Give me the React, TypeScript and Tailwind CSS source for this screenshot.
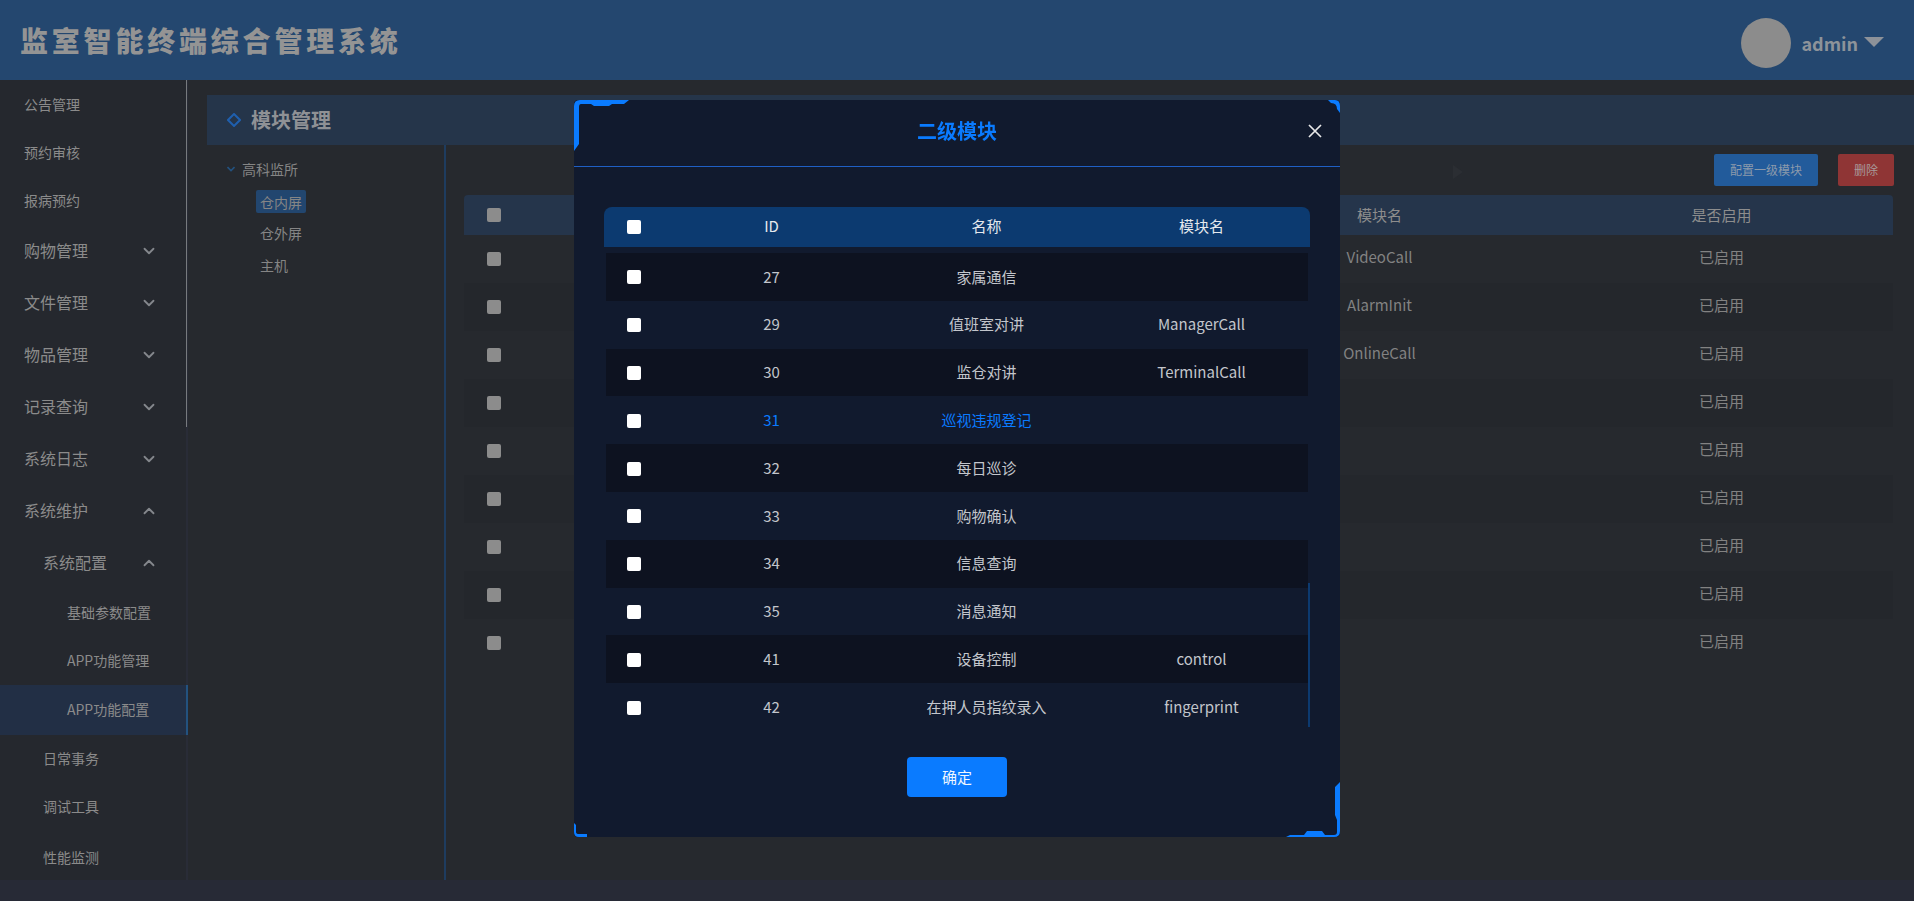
import React from "react";
import { ChevronDown, ChevronUp } from "lucide-react";

const FONT = '"Noto Sans CJK SC", sans-serif';

type NavItem = { label: string; indent: number; big?: boolean; icon?: "down" | "up"; active?: boolean; h: string };

const NAV: NavItem[] = [
  { label: "公告管理", indent: 24, h: "h-[49px]" },
  { label: "预约审核", indent: 24, h: "h-[48px]" },
  { label: "报病预约", indent: 24, h: "h-[48px]" },
  { label: "购物管理", indent: 24, big: true, icon: "down", h: "h-[52px]" },
  { label: "文件管理", indent: 24, big: true, icon: "down", h: "h-[52px]" },
  { label: "物品管理", indent: 24, big: true, icon: "down", h: "h-[52px]" },
  { label: "记录查询", indent: 24, big: true, icon: "down", h: "h-[52px]" },
  { label: "系统日志", indent: 24, big: true, icon: "down", h: "h-[52px]" },
  { label: "系统维护", indent: 24, big: true, icon: "up", h: "h-[52px]" },
  { label: "系统配置", indent: 43, big: true, icon: "up", h: "h-[52px]" },
  { label: "基础参数配置", indent: 67, h: "h-[48px]" },
  { label: "APP功能管理", indent: 67, h: "h-[48px]" },
  { label: "APP功能配置", indent: 67, active: true, h: "h-[50px]" },
  { label: "日常事务", indent: 43, h: "h-[48px]" },
  { label: "调试工具", indent: 43, h: "h-[48px]" },
  { label: "性能监测", indent: 43, h: "h-[50px] pt-[3px]" },
];

const PAGE_ROWS = [
  { name: "VideoCall" },
  { name: "AlarmInit" },
  { name: "OnlineCall" },
  { name: "" },
  { name: "" },
  { name: "" },
  { name: "" },
  { name: "" },
  { name: "" },
];

const MODAL_ROWS = [
  { id: 27, name: "家属通信", mod: "" },
  { id: 29, name: "值班室对讲", mod: "ManagerCall" },
  { id: 30, name: "监仓对讲", mod: "TerminalCall" },
  { id: 31, name: "巡视违规登记", mod: "", hot: true },
  { id: 32, name: "每日巡诊", mod: "" },
  { id: 33, name: "购物确认", mod: "" },
  { id: 34, name: "信息查询", mod: "" },
  { id: 35, name: "消息通知", mod: "" },
  { id: 41, name: "设备控制", mod: "control" },
  { id: 42, name: "在押人员指纹录入", mod: "fingerprint" },
];

function Sidebar() {
  return (
    <aside className="relative w-[188px] shrink-0 bg-[#25282e] border-r-2 border-[#292c37] text-[#8b8b8b]">
      {NAV.map((n) => (
        <div
          key={n.label}
          style={{ paddingLeft: n.indent }}
          className={`flex items-center justify-between pr-[30px] ${n.h} ${n.big ? "text-base" : "text-sm"} ${
            n.active ? "bg-[#222f45] relative" : ""
          }`}
        >
          <span className="pb-[2px]">{n.label}</span>
          {n.icon === "down" && <ChevronDown size={18} strokeWidth={2.4} className="mr-[-2px] text-[#84878c]" />}
          {n.icon === "up" && <ChevronUp size={18} strokeWidth={2.4} className="mr-[-2px] text-[#84878c]" />}
          {n.active && <span className="absolute right-[-2px] top-0 h-full w-[2px] bg-[#23527f]" />}
        </div>
      ))}
      <span className="absolute right-[-1px] top-0 h-[347px] w-[1px] bg-[#777a7e]" />
    </aside>
  );
}

function PageTable() {
  return (
    <div className="text-[15px] text-[#828282]">
      <div className="grid grid-cols-[60px_685px_341px_343px] h-[40px] items-center rounded-t bg-[#25354b] text-[#8d8d8d]">
        <span className="flex justify-center">
          <span className="block size-[14px] rounded-[2px] bg-[#8c8c8c]" />
        </span>
        <span />
        <span className="text-center">模块名</span>
        <span className="text-center">是否启用</span>
      </div>
      {PAGE_ROWS.map((r, i) => (
        <div
          key={i}
          className={`grid grid-cols-[60px_685px_341px_343px] h-[48px] items-center ${
            i % 2 === 1 ? "bg-[#24272c]" : "bg-[#26292e]"
          }`}
        >
          <span className="flex justify-center">
            <span className="block size-[14px] rounded-[2px] bg-[#8c8c8c]" />
          </span>
          <span />
          <span className="pb-[3px] text-center">{r.name}</span>
          <span className="pb-[3px] text-center">已启用</span>
        </div>
      ))}
    </div>
  );
}

function Check() {
  return <input type="checkbox" className="block size-[14px] appearance-none rounded-[2px] bg-white" />;
}

function CornerArt() {
  return (
    <svg className="pointer-events-none absolute left-0 top-0" width="767" height="738" viewBox="0 0 767 738" fill="#0a7bff">
      <path d="M0 6 Q0 0 6 0 H55 L50 4 H38 L35 6 H20 L17 4 H7 Q5 4 5 7 V44 L0 51 Z" />
      <path d="M754 0 H761 Q766 0 766 6 V13 L763 9 Q763 3 757 3 Z" />
      <path d="M761 687 L766 682 V731 Q766 737 760 737 H712 L716 735 H730 L733 731 H748 L751 735 H760 Q763 735 763 732 V720 L761 715 Z" />
      <path d="M0 723 L2 725 V732 Q2 734 5 734 H13 L13 737 H5 Q0 737 0 732 Z" />
    </svg>
  );
}

function Modal() {
  return (
    <div className="fixed inset-0 flex justify-center pt-[100px]">
      <section className="relative h-[737px] w-[766px] rounded-[4px] bg-[#111a2e]">
        <CornerArt />
        <header className="relative flex h-[67px] items-center justify-center border-b border-[#1f5fc4] pb-[4px]">
          <h2 className="text-xl font-bold text-[#0a7bff]">二级模块</h2>
          <svg className="absolute right-[18px] top-[24px]" width="14" height="14" viewBox="0 0 14 14" stroke="#e8e8e8" strokeWidth="1.7">
            <path d="M1 1 L13 13 M13 1 L1 13" />
          </svg>
        </header>

        <div className="mx-[30px] mt-[40px] text-[15px] text-[#c3c6cc]">
          <div className="grid h-[40px] grid-cols-[60px_215px_215px_215px] items-center rounded-t-lg bg-[#0c3a70] text-center text-[#e6e9ee]">
            <span className="flex justify-center">
              <Check />
            </span>
            <span className="pb-[2px]">ID</span>
            <span className="pb-[2px]">名称</span>
            <span className="pb-[2px]">模块名</span>
          </div>
          <div className="relative mt-[6px] h-[474px] overflow-hidden">
            {MODAL_ROWS.map((r, i) => (
              <div
                key={r.id}
                className={`grid h-[47.8px] grid-cols-[60px_215px_215px_215px] items-center rounded-[2px] text-center ${
                  i % 2 === 0 ? "bg-[#0d1220]" : "bg-[#111a2e]"
                } ${r.hot ? "text-[#0a7bff]" : ""}`}
              >
                <span className="flex justify-center pt-[1px]">
                  <Check />
                </span>
                <span>{r.id}</span>
                <span>{r.name}</span>
                <span>{r.mod}</span>
              </div>
            ))}
            <span className="absolute left-0 top-0 h-full w-[2px] bg-[#111a2e]" />
            <span className="absolute right-0 top-0 h-full w-[2px] bg-[#111a2e]" />
            <span className="absolute right-0 top-[330px] h-[144px] w-[2px] bg-[#0c3a70]" />
          </div>
        </div>

        <div className="mt-[30px] flex justify-center">
          <button className="h-[40px] w-[100px] rounded-[4px] bg-[#0a7bff] text-[15px] text-[#eef6ff]">确定</button>
        </div>
      </section>
    </div>
  );
}

export default function App() {
  return (
    <div className="flex h-screen w-full flex-col overflow-hidden bg-[#272a36]" style={{ fontFamily: FONT }}>
      <header className="flex h-[80px] shrink-0 items-center justify-between bg-[#24476f] pl-[20px] pr-[30px]">
        <h1 className="text-[28px] font-black tracking-[3.8px] text-[#949494]">监室智能终端综合管理系统</h1>
        <div className="flex items-center pt-[5px]">
          <span className="block size-[50px] rounded-full bg-[#8c8c8c]" />
          <span className="ml-[10px] text-lg font-bold text-[#8d939a]">admin</span>
          <svg className="ml-[6px] mb-[1px]" width="20" height="10" viewBox="0 0 20 10" fill="#8d9299">
            <path d="M0 0 H20 L10 10 Z" />
          </svg>
        </div>
      </header>

      <div className="flex h-[800px] shrink-0">
        <Sidebar />
        <main className="flex min-w-0 flex-1 flex-col bg-[#26292e] pl-[19px] pt-[15px]">
          <div className="flex h-[50px] shrink-0 items-center bg-[#25354a] pl-[20px]">
            <svg width="14" height="14" viewBox="0 0 14 14" fill="none" stroke="#1f5fae" strokeWidth="2">
              <path d="M7 1 L13 7 L7 13 L1 7 Z" />
            </svg>
            <h2 className="ml-[10px] text-xl font-bold text-[#8f9195]">模块管理</h2>
          </div>
          <div className="flex min-h-0 flex-1">
            <nav className="w-[239px] shrink-0 border-r-2 border-[#1e3c5f] pt-[13px] text-sm text-[#858585]">
              <div className="flex h-[22px] items-center pl-[20px]">
                <svg width="8" height="6" viewBox="0 0 8 6" fill="none" stroke="#23527f" strokeWidth="1.6">
                  <path d="M0.5 1 L4 4.5 L7.5 1" />
                </svg>
                <span className="ml-[7px]">高科监所</span>
              </div>
              <div className="ml-[49px] mt-[10px] flex flex-col items-start gap-[8.5px]">
                <span className="flex h-[23px] items-center rounded-[2px] bg-[#22466f] px-[4px]">仓内屏</span>
                <span className="flex h-[23px] items-center px-[4px]">仓外屏</span>
                <span className="flex h-[23px] items-center px-[4px]">主机</span>
              </div>
            </nav>
            <div className="relative min-w-0 flex-1 pl-[18px]">
              <svg className="absolute left-[1007px] top-[20px]" width="10" height="14" viewBox="0 0 10 14" fill="#2b2e33">
                <path d="M0 0 L10 7 L0 14 Z" />
              </svg>
              <div className="flex h-[50px] items-center justify-end gap-[20px] pr-[20px]">
                <button className="h-[32px] w-[104px] rounded-[2px] bg-[#225b9b] text-xs text-[#8c9aab]">配置一级模块</button>
                <button className="h-[32px] w-[56px] rounded-[2px] bg-[#8f3535] text-xs text-[#a89a9a]">删除</button>
              </div>
              <div className="w-[1429px]">
                <PageTable />
              </div>
            </div>
          </div>
        </main>
      </div>
      <Modal />
    </div>
  );
}
